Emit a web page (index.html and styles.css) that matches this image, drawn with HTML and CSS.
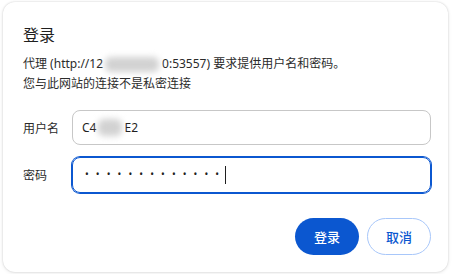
FILE: index.html
```html
<!DOCTYPE html>
<html lang="zh-CN">
<head>
<meta charset="utf-8">
<link rel="stylesheet" href="styles.css">
</head>
<body>
<div class="dialog">
  <h1 class="title">登录</h1>
  <p class="msg">代理 (http://12<span class="blur blur-url"></span>0:53557) 要求提供用户名和密码。</p>
  <p class="msg">您与此网站的连接不是私密连接</p>
  <div class="form">
    <div class="row">
      <span class="label">用户名</span>
      <div class="field">C4<span class="blur blur-user"></span>E2</div>
    </div>
    <div class="row">
      <span class="label">密码</span>
      <div class="field focused"><span class="dots">•••••••••••••</span><span class="caret"></span></div>
    </div>
  </div>
  <div class="actions">
    <button class="btn primary">登录</button>
    <button class="btn secondary">取消</button>
  </div>
</div>
</body>
</html>
```

FILE: styles.css
```css
html, body {
  margin: 0;
  padding: 0;
  background: #ffffff;
}
body {
  font-family: "Noto Sans", "Noto Sans CJK SC", sans-serif;
  color: #1f1f1f;
  padding: 2px 5px 2px 3px;
}
.dialog {
  height: 270px;
  box-sizing: border-box;
  border-radius: 12px;
  box-shadow: 0 0 2px rgba(0,0,0,0.18), 0 1px 4px rgba(0,0,0,0.08);
  padding: 22px 17px 0 20px;
  background: #fff;
}
.title {
  margin: 0;
  font-size: 16px;
  font-weight: 400;
  line-height: 22px;
  color: #1f1f1f;
}
.msg {
  margin: 0;
  font-size: 12px;
  line-height: 20px;
  color: #2b2b2b;
}
.title + .msg {
  margin-top: 8px;
}
.blur {
  display: inline-block;
  vertical-align: middle;
  background: #d2d2d2;
  filter: blur(3px);
  border-radius: 6px;
}
.blur-url {
  width: 54px;
  height: 15px;
  margin: 0 3px 0 2px;
}
.blur-user {
  width: 24px;
  height: 17px;
  margin: 0 2px;
}
.form {
  margin-top: 16px;
  display: flex;
  flex-direction: column;
  gap: 12px;
}
.row {
  display: flex;
  align-items: center;
}
.label {
  width: 49px;
  font-size: 12px;
  color: #2b2b2b;
}
.field {
  flex: 1;
  height: 35px;
  box-sizing: border-box;
  border: 1px solid #c7c7c7;
  border-radius: 8px;
  display: flex;
  align-items: center;
  padding-left: 9px;
  font-size: 12px;
  color: #1f1f1f;
}
.field.focused {
  border: 1px solid #0b57d0;
  box-shadow: 0 0 0 1px #0b57d0;
  height: 36px;
  padding-left: 12px;
}
.dots {
  font-size: 10px;
  letter-spacing: 7.1px;
  color: #1f1f1f;
  position: relative;
  top: -1px;
}
.caret {
  display: inline-block;
  width: 1px;
  height: 18px;
  background: #1f1f1f;
  margin-left: -1px;
}
.actions {
  margin-top: 25px;
  display: flex;
  justify-content: flex-end;
  gap: 8px;
}
.btn {
  height: 37px;
  width: 64px;
  border-radius: 19px;
  font-family: "Noto Sans CJK SC", sans-serif;
  font-size: 13px;
  font-weight: 500;
  cursor: pointer;
}
.primary {
  background: #0b57d0;
  color: #fff;
  border: none;
}
.secondary {
  background: #fff;
  color: #0b57d0;
  border: 1px solid #a8c7fa;
}
```
